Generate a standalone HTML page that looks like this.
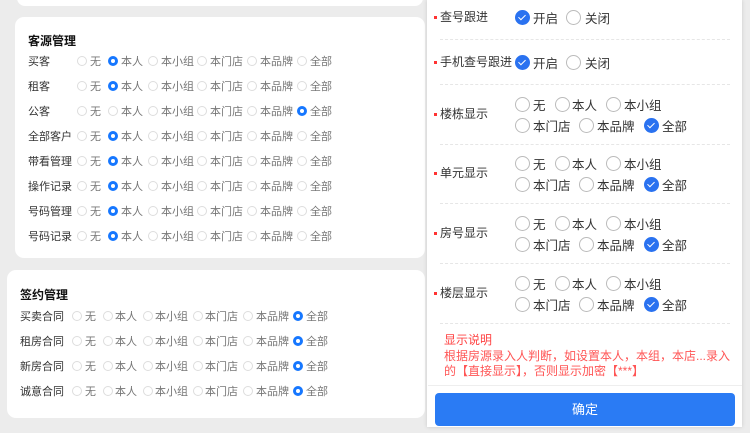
<!DOCTYPE html>
<html><head><meta charset="utf-8"><style>
*{margin:0;padding:0;box-sizing:border-box}
body{width:750px;height:433px;background:#ececec;position:relative;overflow:hidden;font-family:"Liberation Sans","Noto Sans CJK SC",sans-serif}
.card{position:absolute;background:#fff;border-radius:9px}
.t{position:absolute;white-space:nowrap}
.s{font-size:11px;color:#777}
.lbl{font-size:11px;color:#333}
.r{position:absolute;width:10px;height:10px;border-radius:50%;border:1px solid #ddd;background:#fff}
.r.on{border:3px solid #1677ff;background:#fff}
.R{position:absolute;width:15px;height:15px;border-radius:50%;border:1px solid #bbb;background:#fff}
.R.on{background:#2a72f0;border-color:#2a72f0}
.R.on:after{content:"";position:absolute;left:4px;top:2.5px;width:3px;height:6px;border:solid #fff;border-width:0 1.6px 1.6px 0;transform:rotate(45deg)}
.big{font-size:12.5px;color:#333}
.lb{font-size:12px;color:#333}
.dot{position:absolute;width:3px;height:3px;background:#f33;left:434px}
.hr{position:absolute;left:440px;width:290px;border-top:1px dashed #e6e6e6}
</style></head><body>
<div class="card" style="left:17px;top:-10px;width:406px;height:16px"></div>
<div class="card" style="left:15px;top:17px;width:410px;height:241px"></div>
<div class="card" style="left:7px;top:270px;width:418px;height:148px"></div>
<div style="position:absolute;left:427px;top:0;width:315px;height:427px;background:#fff;box-shadow:0 0 4px rgba(0,0,0,.15)"></div>
<div id="L"></div>
<div class="t" style="left:28px;top:32px;font-size:12px;font-weight:bold;color:#111">客源管理</div>
<div class="t" style="left:20px;top:286px;font-size:12px;font-weight:bold;color:#111">签约管理</div>
<div style="position:absolute;left:428px;top:385px;width:314px;border-top:1px solid #eee"></div>
<div style="position:absolute;left:435px;top:393px;width:300px;height:33px;background:#2a7bf4;border-radius:4px;color:#fff;font-size:13px;text-align:center;line-height:33px">确定</div>
<div class="t" style="left:444px;top:331px;font-size:12px;color:#f44">显示说明</div>
<div class="t" style="left:444px;top:349px;font-size:12px;color:#f55;line-height:15px">根据房源录入人判断，如设置本人，本组，本店...录入<br>的【直接显示】，否则显示加密【***】</div>
<script>
var L=document.getElementById('L'),h='';
var opts=['无','本人','本小组','本门店','本品牌','全部'];
function rows(labels,sel,y0,lx,rc,tx){labels.forEach(function(l,i){var y=y0+i*25;h+='<div class="t lbl" style="left:'+lx+'px;top:'+(y-8)+'px">'+l+'</div>';opts.forEach(function(o,j){h+='<div class="r'+(sel[i]==j?' on':'')+'" style="left:'+(rc[j]-5)+'px;top:'+(y-5)+'px"></div><div class="t s" style="left:'+tx[j]+'px;top:'+(y-8)+'px">'+o+'</div>';});});}
rows(['买客','租客','公客','全部客户','带看管理','操作记录','号码管理','号码记录'],[1,1,5,1,1,1,1,1],61,28,[82,113,153,202,252,302],[90,121,161,210,260,310]);
rows(['买卖合同','租房合同','新房合同','诚意合同'],[5,5,5,5],316,20,[77,108,148,198,248,298],[85,115,155,205,256,306]);
function R(x,y,on,t,tx){h+='<div class="R'+(on?' on':'')+'" style="left:'+(x-7.5)+'px;top:'+(y-7.5)+'px"></div><div class="t big" style="left:'+tx+'px;top:'+(y-9)+'px">'+t+'</div>';}
function lab(t,y){h+='<div class="dot" style="top:'+(y-1)+'px"></div><div class="t lb" style="left:440px;top:'+(y-9)+'px">'+t+'</div>';}
lab('查号跟进',17);R(522,17,1,'开启',533);R(573,17,0,'关闭',585);h+='<div class="hr" style="top:39px"></div>';
lab('手机查号跟进',62);R(522,62,1,'开启',533);R(573,62,0,'关闭',585);h+='<div class="hr" style="top:84px"></div>';
[['楼栋显示',104],['单元显示',163],['房号显示',223],['楼层显示',283]].forEach(function(a,i){var y=a[1];lab(a[0],y+10);R(522,y,0,'无',533);R(562,y,0,'本人',572);R(613,y,0,'本小组',624);R(522,y+21,0,'本门店',533);R(586,y+21,0,'本品牌',597);R(651,y+21,1,'全部',662);h+='<div class="hr" style="top:'+(y+40)+'px"></div>';});
L.innerHTML=h;
</script>
</body></html>
